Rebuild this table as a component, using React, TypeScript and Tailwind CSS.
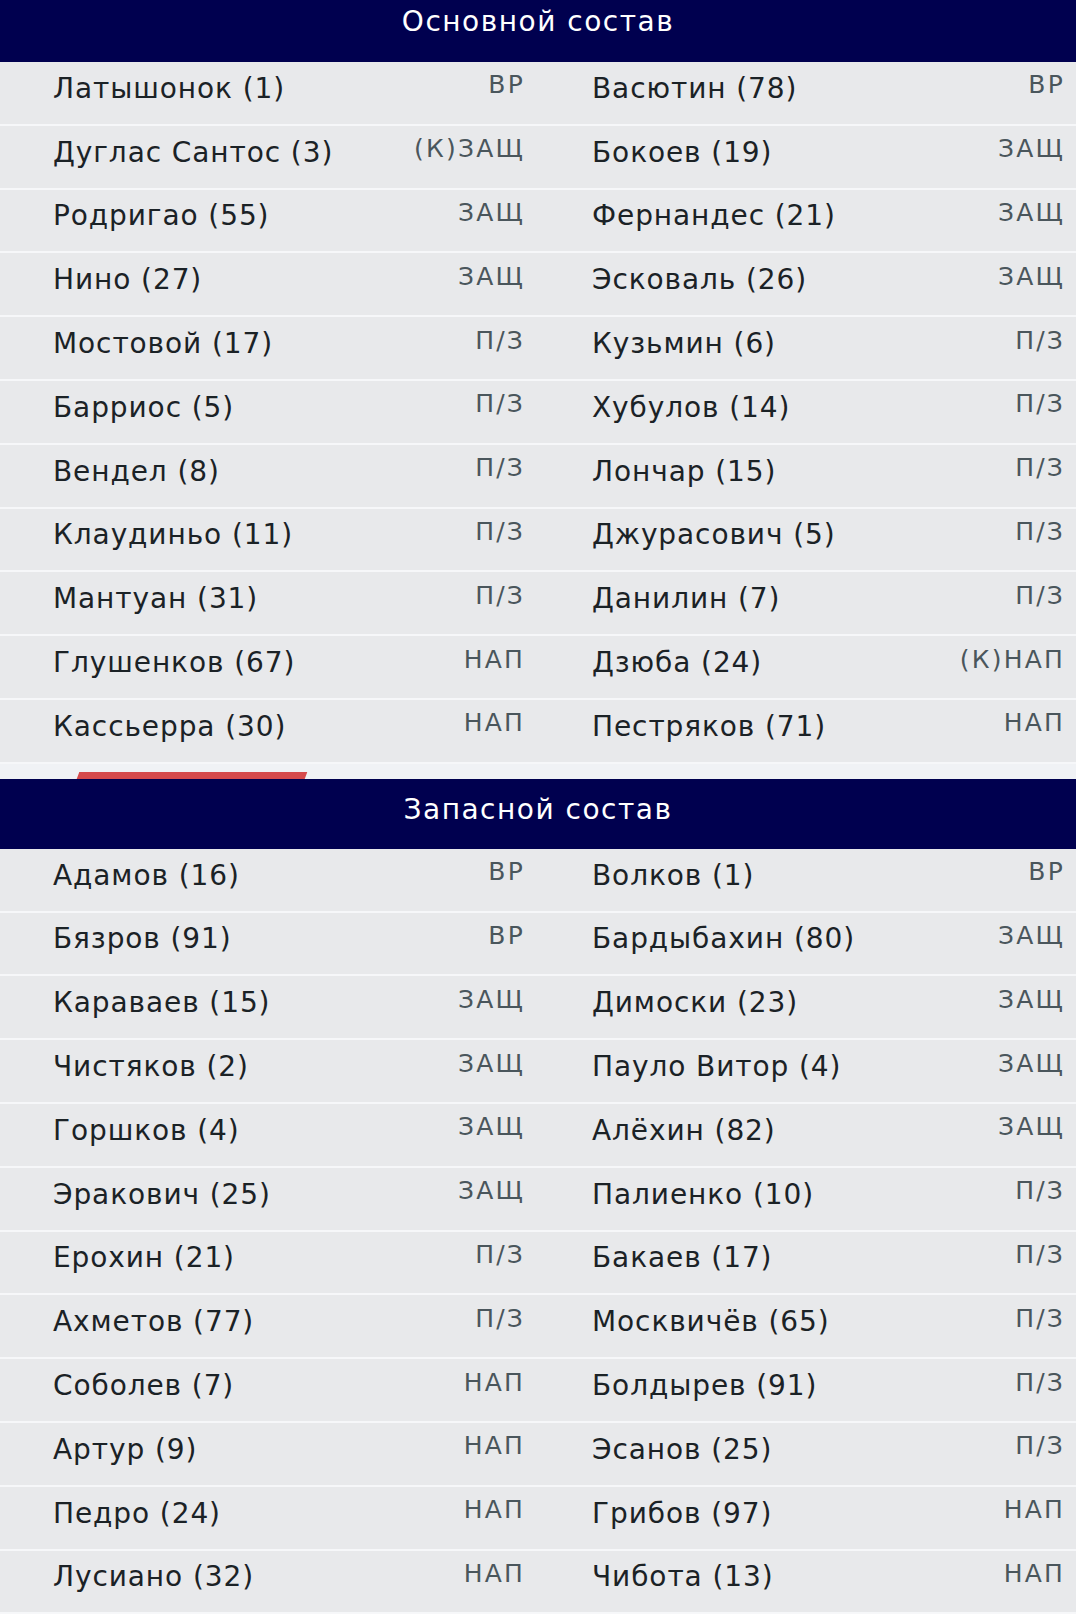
const starters: [string, string, string, string][] = [
  ["Латышонок (1)", "ВР", "Васютин (78)", "ВР"],
  ["Дуглас Сантос (3)", "(К)ЗАЩ", "Бокоев (19)", "ЗАЩ"],
  ["Родригао (55)", "ЗАЩ", "Фернандес (21)", "ЗАЩ"],
  ["Нино (27)", "ЗАЩ", "Эсковаль (26)", "ЗАЩ"],
  ["Мостовой (17)", "П/З", "Кузьмин (6)", "П/З"],
  ["Барриос (5)", "П/З", "Хубулов (14)", "П/З"],
  ["Вендел (8)", "П/З", "Лончар (15)", "П/З"],
  ["Клаудиньо (11)", "П/З", "Джурасович (5)", "П/З"],
  ["Мантуан (31)", "П/З", "Данилин (7)", "П/З"],
  ["Глушенков (67)", "НАП", "Дзюба (24)", "(К)НАП"],
  ["Кассьерра (30)", "НАП", "Пестряков (71)", "НАП"],
];

const reserves: [string, string, string, string][] = [
  ["Адамов (16)", "ВР", "Волков (1)", "ВР"],
  ["Бязров (91)", "ВР", "Бардыбахин (80)", "ЗАЩ"],
  ["Караваев (15)", "ЗАЩ", "Димоски (23)", "ЗАЩ"],
  ["Чистяков (2)", "ЗАЩ", "Пауло Витор (4)", "ЗАЩ"],
  ["Горшков (4)", "ЗАЩ", "Алёхин (82)", "ЗАЩ"],
  ["Эракович (25)", "ЗАЩ", "Палиенко (10)", "П/З"],
  ["Ерохин (21)", "П/З", "Бакаев (17)", "П/З"],
  ["Ахметов (77)", "П/З", "Москвичёв (65)", "П/З"],
  ["Соболев (7)", "НАП", "Болдырев (91)", "П/З"],
  ["Артур (9)", "НАП", "Эсанов (25)", "П/З"],
  ["Педро (24)", "НАП", "Грибов (97)", "НАП"],
  ["Лусиано (32)", "НАП", "Чибота (13)", "НАП"],
];

const Cell = ({ name, pos, right }: { name: string; pos: string; right?: boolean }) => (
  <div className={`flex h-full w-1/2 items-center justify-between pb-[8px] ${right ? "pl-[54px] pr-[11px]" : "pl-[53px] pr-[13px]"}`}>
    <span className="text-[28px] leading-none tracking-[0.9px] text-[#1b2226]">{name}</span>
    <span className="-mt-[8px] text-[25px] leading-none tracking-[2.2px] text-[#4a565c]">{pos}</span>
  </div>
);

const Section = ({ rows }: { rows: [string, string, string, string][] }) => (
  <div>
    {rows.map(([n1, p1, n2, p2]) => (
      <div key={n1} className="flex h-[63.8px] border-b-2 border-[#f6f7f9] bg-[#e8e9eb]">
        <Cell name={n1} pos={p1} />
        <Cell name={n2} pos={p2} right />
      </div>
    ))}
  </div>
);

export default function App() {
  return (
    <div className="min-h-screen w-[1076px] overflow-hidden bg-[#f0f2f5] font-['DejaVu_Sans','Noto_Sans',sans-serif]">
      <div className="flex h-[62px] items-start justify-center bg-[#00004f] pt-[4px]">
        <h2 className="text-[28px] leading-[36px] tracking-[1.5px] text-white">Основной состав</h2>
      </div>
      <Section rows={starters} />
      <div className="flex h-[15px] items-end bg-[#f0f2f5] pl-[78px]">
        <div className="h-[7px] w-[228px] -skew-x-[20deg] bg-[#d64a4c]"></div>
      </div>
      <div className="flex h-[70px] items-center justify-center bg-[#00004f] pb-[8px]">
        <h2 className="text-[28px] leading-[36px] tracking-[1.5px] text-white">Запасной состав</h2>
      </div>
      <Section rows={reserves} />
    </div>
  );
}
